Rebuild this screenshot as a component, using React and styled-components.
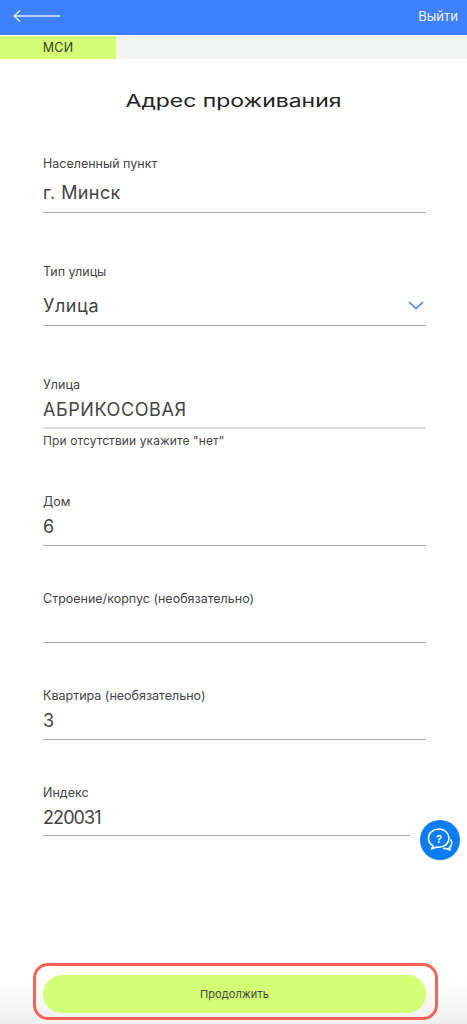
import styled, { createGlobalStyle } from "styled-components";

const Global = createGlobalStyle`
    html, body { margin: 0; padding: 0; background: #fff; }
    * { box-sizing: border-box; }
`

const Pagina = styled.div`
    position: relative;
    display: flex;
    flex-direction: column;
    height: 1024px;
    overflow: hidden;
    font-family: Inter, "Noto Sans", sans-serif;
    color: #3a3a3a;
`

const Topo = styled.header`
    display: flex;
    align-items: center;
    justify-content: space-between;
    height: 35px;
    padding: 0 9px 3px 13px;
    background: #3f80ff;
`

const Sair = styled.span`
    color: #f0f4ff;
    font-size: 13px;
`

const Progresso = styled.div`
    height: 23px;
    margin-top: 1px;
    background: #f2f4f3;
`

const Etapa = styled.div`
    display: flex;
    align-items: center;
    justify-content: center;
    width: 116px;
    height: 100%;
    background: #d2ff73;
    color: #3a3d2c;
    font-size: 12.5px;
    letter-spacing: 0.3px;
`

const Titulo = styled.h1`
    margin: 31px 0 0;
    height: 22px;
    line-height: 22px;
    text-align: center;
    font-family: Inter, sans-serif;
    font-size: 17px;
    font-weight: 400;
    color: #222;
    transform: scaleX(1.35);
`

const Formulario = styled.form`
    display: flex;
    flex-direction: column;
    padding: 0 41px 0 43px;
`

const Campo = styled.div`
    margin-top: ${({ $topo }) => $topo}px;
`

const Rotulo = styled.div`
    height: 16px;
    line-height: 16px;
    font-size: 12.5px;
    color: #444;
`

const Valor = styled.div`
    display: flex;
    align-items: center;
    justify-content: space-between;
    height: ${({ $alto }) => $alto}px;
    padding-top: ${({ $desce }) => $desce || 0}px;
    padding-bottom: 2px;
    font-size: 18px;
    letter-spacing: ${({ $espaco }) => $espaco ?? 0.3}px;
    color: #444;
    border-bottom: ${({ $ativo }) => ($ativo ? "2px solid #dcdcdc" : "1px solid #a8a8a8")};
    margin-right: ${({ $curto }) => ($curto ? "16px" : "0")};
`

const Seta = styled.svg`
    margin-right: 2px;
`

const Dica = styled.div`
    margin-top: 4px;
    height: 16px;
    line-height: 16px;
    font-size: 12px;
    letter-spacing: 0.1px;
    color: #444;
`

const Rodape = styled.footer`
    margin-top: auto;
    height: 64px;
    padding: 3px 29px 4px 33px;
    background: linear-gradient(#fff 30%, #efefef);
`

const Destaque = styled.div`
    height: 57px;
    padding: 9px 9px 4px 7px;
    border: 3px solid #ff6253;
    border-radius: 15px;
`

const Botao = styled.button`
    display: block;
    width: 100%;
    height: 38px;
    border: none;
    border-radius: 19px;
    background: #d2ff73;
    color: #444;
    font-family: inherit;
    font-size: 11px;
    letter-spacing: 0.1px;
`

const Ajuda = styled.div`
    position: absolute;
    left: 420px;
    top: 820px;
    display: flex;
    align-items: center;
    justify-content: center;
    width: 40px;
    height: 40px;
    border-radius: 50%;
    background: #0a7cf5;
`

const campos = [
    { rotulo: "Населенный пункт", valor: "г. Минск", topo: 44, alto: 41, desce: 2, espaco: 0.4 },
    { rotulo: "Тип улицы", valor: "Улица", topo: 51, alto: 46, desce: 8, espaco: 0.6, select: true },
    { rotulo: "Улица", valor: "АБРИКОСОВАЯ", topo: 51, alto: 36, ativo: true, espaco: 0.6, dica: 'При отсутствии укажите "нет"' },
    { rotulo: "Дом", valor: "6", topo: 45, alto: 36 },
    { rotulo: "Строение/корпус (необязательно)", valor: "", topo: 45, alto: 36 },
    { rotulo: "Квартира (необязательно)", valor: "3", topo: 45, alto: 36 },
    { rotulo: "Индекс", valor: "220031", topo: 45, alto: 35, curto: true, espaco: -0.9 },
];

export default function App() {
    return (
        <Pagina>
            <Global />
            <Topo>
                <svg width="48" height="14" viewBox="0 0 48 14" fill="none" stroke="#e6eeff" strokeWidth="1.4">
                    <path d="M1 7H47M7 1.5L1 7l6 5.5" />
                </svg>
                <Sair>Выйти</Sair>
            </Topo>
            <Progresso>
                <Etapa>МСИ</Etapa>
            </Progresso>
            <Titulo>Адрес проживания</Titulo>
            <Formulario>
                {campos.map((campo) => (
                    <Campo key={campo.rotulo} $topo={campo.topo}>
                        <Rotulo>{campo.rotulo}</Rotulo>
                        <Valor $alto={campo.alto} $ativo={campo.ativo} $curto={campo.curto} $desce={campo.desce} $espaco={campo.espaco}>
                            {campo.valor}
                            {campo.select && (
                                <Seta width="16" height="9" viewBox="0 0 16 9" fill="none" stroke="#3f80ff" strokeWidth="1.6">
                                    <path d="M1 1l7 6.5L15 1" />
                                </Seta>
                            )}
                        </Valor>
                        {campo.dica && <Dica>{campo.dica}</Dica>}
                    </Campo>
                ))}
            </Formulario>
            <Ajuda>
                <svg width="30" height="30" viewBox="0 0 30 30" fill="none" stroke="#fff" strokeWidth="1.6" strokeLinejoin="round">
                    <path d="M14 4c-6 0-10.500 4-10.500 9.200 0 3.300 1.800 6 4.500 7.600l-1.500 3.200 5.200-2c.8.200 1.600.200 2.300.200 5.800 0 10-4 10-9S19.800 4 14 4z" />
                    <path d="M25.500 14.500c1.200 1.300 1.500 3 1.200 4.500-.3 1.500-1.200 2.800-2.400 3.600l.9 2.400-4.200-1.500c-1 .2-2 .1-3-.2" />
                    <text x="14" y="17.500" textAnchor="middle" fill="#fff" stroke="none" fontFamily="Inter, sans-serif" fontSize="11" fontWeight="600">?</text>
                </svg>
            </Ajuda>
            <Rodape>
                <Destaque>
                    <Botao type="button">Продолжить</Botao>
                </Destaque>
            </Rodape>
        </Pagina>
    )
}
